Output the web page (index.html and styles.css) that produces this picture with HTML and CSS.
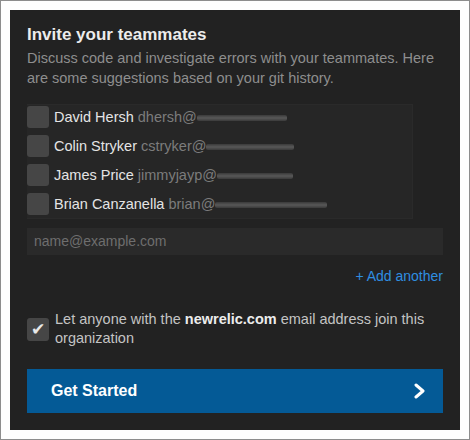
FILE: index.html
```html
<!DOCTYPE html>
<html>
<head>
<meta charset="utf-8">
<link rel="stylesheet" href="styles.css">
</head>
<body>
<div class="frame">
  <div class="panel">
    <h1 class="title">Invite your teammates</h1>
    <p class="desc">Discuss code and investigate errors with your teammates. Here are some suggestions based on your git history.</p>
    <div class="suggestions">
      <div class="row"><span class="box"></span><span class="name">David Hersh</span><span class="email">dhersh@</span><span class="blur" style="width:90px"></span></div>
      <div class="row"><span class="box"></span><span class="name">Colin Stryker</span><span class="email">cstryker@</span><span class="blur" style="width:88px"></span></div>
      <div class="row"><span class="box"></span><span class="name">James Price</span><span class="email">jimmyjayp@</span><span class="blur" style="width:76px"></span></div>
      <div class="row"><span class="box"></span><span class="name">Brian Canzanella</span><span class="email">brian@</span><span class="blur" style="width:112px"></span></div>
    </div>
    <div class="input">name@example.com</div>
    <div class="add"><span>+ Add another</span></div>
    <div class="allow">
      <span class="box checked">&#10004;</span>
      <span class="allow-text">Let anyone with the <b>newrelic.com</b> email address join this organization</span>
    </div>
    <div class="button">
      <span>Get Started</span>
      <svg width="14" height="16" viewBox="0 0 14 16"><path d="M3 2 L10 8 L3 14" fill="none" stroke="#fff" stroke-width="3" stroke-linecap="round" stroke-linejoin="round"/></svg>
    </div>
  </div>
</div>
</body>
</html>
```
FILE: styles.css
```css
* { box-sizing: border-box; }
html, body { margin: 0; padding: 0; background: #fff; }
body { font-family: "Liberation Sans", Arial, sans-serif; }
.frame {
  width: 470px;
  height: 440px;
  border: 1px solid #8e8e8e;
  padding: 9px;
  background: #fff;
}
.panel {
  width: 450px;
  height: 420px;
  background: #222222;
  padding: 15px 17px 0 17px;
  display: flex;
  flex-direction: column;
}
.title {
  margin: 0;
  font-size: 17px;
  line-height: 20px;
  font-weight: bold;
  color: #ececec;
}
.desc {
  margin: 3px 0 0 0;
  font-size: 14.5px;
  line-height: 20px;
  color: #8e8e8e;
}
.suggestions {
  margin-top: 16px;
  width: 386px;
  height: 115px;
  background: #262626;
  border: 1px solid #2a2a2a;
  border-left: none;
  padding-top: 1px;
  display: flex;
  flex-direction: column;
  gap: 7px;
}
.row {
  display: flex;
  align-items: center;
  height: 22px;
  font-size: 14.5px;
}
.box {
  width: 22px;
  height: 22px;
  background: #464646;
  border-radius: 3px;
  flex: none;
  margin-right: 5px;
}
.name { color: #e4e4e4; margin-right: 4px; }
.email { color: #7c7c7c; }
.blur {
  height: 6px;
  border-radius: 2px;
  background: linear-gradient(180deg, #3a3a3a, #585858 50%, #3a3a3a);
  margin-top: 1px;
}
.input {
  margin-top: 9px;
  width: 416px;
  height: 27px;
  background: #2a2a2a;
  color: #6e6e6e;
  font-size: 14px;
  line-height: 27px;
  padding-left: 7px;
}
.add {
  margin-top: 11px;
  display: flex;
  justify-content: flex-end;
  width: 416px;
  font-size: 14px;
  line-height: 20px;
  color: #2f8ee0;
}
.allow {
  margin-top: 24px;
  display: flex;
  align-items: center;
  width: 416px;
}
.box.checked {
  height: 23px;
  margin-right: 6px;
  color: #e8e8e8;
  font-size: 17px;
  line-height: 23px;
  text-align: center;
}
.allow-text {
  font-size: 14.5px;
  line-height: 19px;
  color: #c4c4c4;
}
.allow-text b { color: #ececec; }
.button {
  margin-top: 21px;
  width: 416px;
  height: 44px;
  background: #045a96;
  display: flex;
  align-items: center;
  justify-content: space-between;
  padding: 0 16px 0 24px;
  color: #fff;
  font-weight: bold;
  font-size: 16px;
}
.button svg { display: block; }
```
